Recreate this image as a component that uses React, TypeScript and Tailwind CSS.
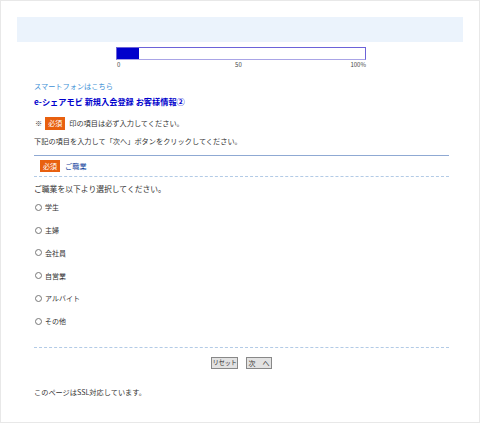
import React from "react";

const items = ["学生", "主婦", "会社員", "自営業", "アルバイト", "その他"];

export default function App() {
  return (
    <div
      className="w-[480px] h-[423px] box-border border border-[#e8e8e8] bg-white text-[#333] overflow-hidden"
      style={{ fontFamily: '"Noto Sans CJK JP", "Noto Sans", sans-serif' }}
    >
      <div className="px-[16px] pt-[16px]">
        <div className="h-[25px] bg-[#ebf3fc]" />
        {/* progress */}
        <div className="mt-[5px] flex flex-col items-center pl-[2px]">
          <div className="w-[250px] h-[13px] box-border border border-[#6c63d8] border-b-[#a9a4e6] bg-white">
            <div className="w-[22px] h-full bg-[#0000cc]" />
          </div>
          <div className="w-[250px] h-[10px] flex justify-between text-[6px] leading-[10px] text-[#444] pl-[1px]">
            <span>0</span>
            <span className="pl-[6px]">50</span>
            <span>100%</span>
          </div>
        </div>
        <div className="pl-[17px] w-[432px] box-border">
          <div className="mt-[9px] h-[14px] leading-[14px] text-[7.2px] text-[#3d8fd6]">スマートフォンはこちら</div>
          <div className="h-[16px] leading-[16px] text-[8.2px] font-bold text-[#0000cc]">e-シェアモビ 新規入会登録 お客様情報②</div>
          <div className="mt-[6px] h-[16px] flex items-center text-[7.2px]">
            <span className="ml-[1px]">※</span>
            <span className="ml-[3px] w-[20px] h-[13px] bg-[#e8600f] text-white flex items-center justify-center text-[7px]">必須</span>
            <span className="ml-[4px]">印の項目は必ず入力してください。</span>
          </div>
          <div className="mt-[3px] h-[14px] leading-[14px] text-[7.2px]">下記の項目を入力して「次へ」ボタンをクリックしてください。</div>
          <div className="mt-[7px] h-px bg-[#8fa9d3]" />
          <div className="h-[20px] flex items-center text-[7.2px]">
            <span className="ml-[6px] w-[20px] h-[12px] bg-[#e8600f] text-white flex items-center justify-center text-[7px]">必須</span>
            <span className="ml-[5px] text-[#17479e]">ご職業</span>
          </div>
          <div className="border-t border-dashed border-[#b3cbe6]" />
          <div className="mt-[5px] h-[14px] leading-[14px] text-[7.8px]">ご職業を以下より選択してください。</div>
          <div>
            {items.map((t) => (
              <div key={t} className="h-[22.8px] flex items-center text-[7px]">
                <span className="ml-[1px] w-[7px] h-[7px] rounded-full border border-[#777] box-border bg-white" />
                <span className="ml-[3px]">{t}</span>
              </div>
            ))}
          </div>
          <div className="mt-[14px] border-t border-dashed border-[#b3cbe6]" />
          <div className="mt-[9px] flex justify-center gap-[8px]">
            <span className="h-[12px] w-[27px] box-border border border-[#888] bg-[#e2e2e2] text-[6.4px] tracking-[-0.4px] whitespace-nowrap leading-[10px] flex items-center justify-center overflow-hidden">リセット</span>
            <span className="h-[12px] w-[26px] box-border border border-[#888] bg-[#e2e2e2] text-[7px] whitespace-nowrap leading-[10px] flex items-center justify-center">次　へ</span>
          </div>
          <div className="mt-[16px] h-[14px] leading-[14px] text-[7.2px]">このページはSSL対応しています。</div>
        </div>
      </div>
    </div>
  );
}
